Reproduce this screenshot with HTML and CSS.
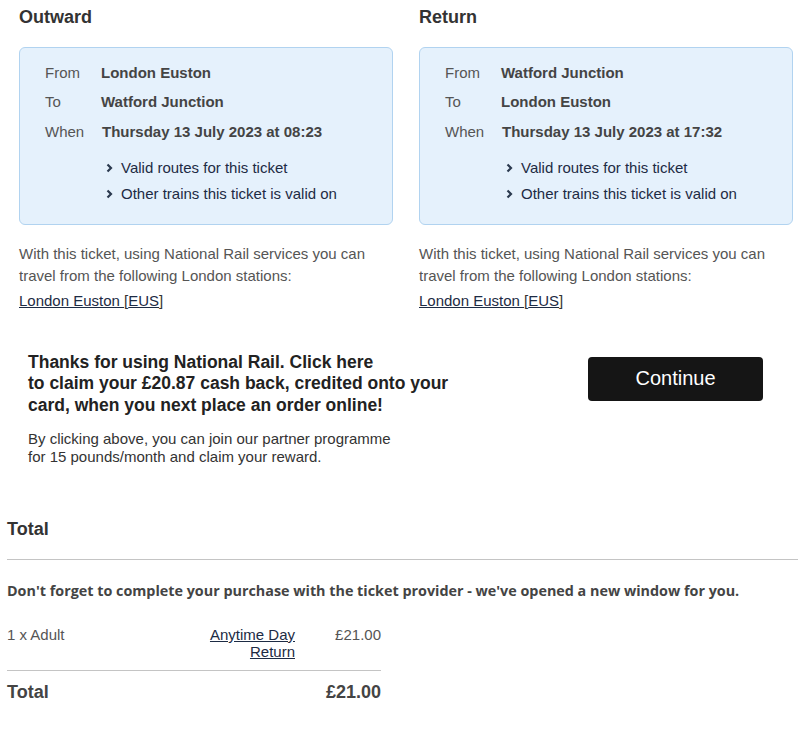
FILE: index.html
```html
<!DOCTYPE html>
<html>
<head>
<meta charset="utf-8">
<link rel="stylesheet" href="styles.css">
</head>
<body>
<div class="page">
  <div class="journeys">
    <section class="journey">
      <h2 class="jhead">Outward</h2>
      <div class="box">
        <div class="row"><span class="lbl">From</span><span class="val">London Euston</span></div>
        <div class="row"><span class="lbl">To</span><span class="val">Watford Junction</span></div>
        <div class="row"><span class="lbl">When</span><span class="val when">Thursday 13 July 2023 at 08:23</span></div>
        <ul class="links">
          <li><span class="chev"><svg width="7" height="10" viewBox="0 0 7 10"><path d="M1.5 1.5 L5 5 L1.5 8.5" fill="none" stroke="#2b3a4f" stroke-width="2.2"/></svg></span>Valid routes for this ticket</li>
          <li><span class="chev"><svg width="7" height="10" viewBox="0 0 7 10"><path d="M1.5 1.5 L5 5 L1.5 8.5" fill="none" stroke="#2b3a4f" stroke-width="2.2"/></svg></span>Other trains this ticket is valid on</li>
        </ul>
      </div>
      <p class="desc">With this ticket, using National Rail services you can travel from the following London stations:</p>
      <p class="stations"><a class="stn" href="#">London Euston </a>[<a class="stn" href="#">EUS</a>]</p>
    </section>
    <section class="journey">
      <h2 class="jhead">Return</h2>
      <div class="box">
        <div class="row"><span class="lbl">From</span><span class="val">Watford Junction</span></div>
        <div class="row"><span class="lbl">To</span><span class="val">London Euston</span></div>
        <div class="row"><span class="lbl">When</span><span class="val when">Thursday 13 July 2023 at 17:32</span></div>
        <ul class="links">
          <li><span class="chev"><svg width="7" height="10" viewBox="0 0 7 10"><path d="M1.5 1.5 L5 5 L1.5 8.5" fill="none" stroke="#2b3a4f" stroke-width="2.2"/></svg></span>Valid routes for this ticket</li>
          <li><span class="chev"><svg width="7" height="10" viewBox="0 0 7 10"><path d="M1.5 1.5 L5 5 L1.5 8.5" fill="none" stroke="#2b3a4f" stroke-width="2.2"/></svg></span>Other trains this ticket is valid on</li>
        </ul>
      </div>
      <p class="desc">With this ticket, using National Rail services you can travel from the following London stations:</p>
      <p class="stations"><a class="stn" href="#">London Euston </a>[<a class="stn" href="#">EUS</a>]</p>
    </section>
  </div>

  <div class="promo">
    <div class="promo-text">
      <p class="promo-title">Thanks for using National Rail. Click here<br>to claim your £20.87 cash back, credited onto your card, when you next place an order online!</p>
      <p class="promo-small">By clicking above, you can join our partner programme<br>for 15 pounds/month and claim your reward.</p>
    </div>
    <button class="continue">Continue</button>
  </div>

  <h2 class="total-head">Total</h2>
  <hr class="rule">
  <p class="reminder">Don't forget to complete your purchase with the ticket provider - we've opened a new window for you.</p>
  <div class="summary">
    <div class="line">
      <span class="qty">1 x Adult</span>
      <a class="tkt" href="#">Anytime Day<br>Return</a>
      <span class="price">£21.00</span>
    </div>
    <div class="tot">
      <span>Total</span>
      <span>£21.00</span>
    </div>
  </div>
</div>
</body>
</html>
```

FILE: styles.css
```css
* { box-sizing: border-box; }
html, body { margin: 0; padding: 0; background: #fff; }
body {
  font-family: "Liberation Sans", Arial, sans-serif;
  color: #333;
  font-size: 15px;
}
.page { padding: 0 0 0 7px; }
.journeys {
  display: grid;
  grid-template-columns: 374px 374px;
  column-gap: 26px;
  padding-left: 12px;
}
.jhead {
  font-size: 18px;
  font-weight: bold;
  margin: 7px 0 0;
  line-height: 20px;
  color: #333;
}
.box {
  margin-top: 20px;
  background: #e5f1fc;
  border: 1px solid #b1d3f0;
  border-radius: 6px;
  padding: 15px 0 20px 25px;
}
.row {
  display: flex;
  height: 29.5px;
  align-items: flex-start;
  line-height: 20px;
}
.row:first-child { height: 29px; }
.row:nth-child(2) { height: 30px; }
.lbl { width: 56px; color: #555; }
.val { font-weight: bold; color: #444; }
.when { margin-left: 1px; }
.links {
  list-style: none;
  margin: 6px 0 0 61px;
  padding: 0;
}
.links li {
  line-height: 20px;
  height: 26px;
  color: #1d2b44;
  display: flex;
  align-items: flex-start;
}
.links li:last-child { height: 20px; }
.chev { width: 15px; padding-top: 5px; display: inline-block; }
.chev svg { display: block; }
.desc {
  margin: 18px 0 0;
  line-height: 22px;
  color: #555;
}
.stations {
  margin: 3px 0 0;
  line-height: 22px;
  color: #333;
}
.stn { color: #1d2b44; text-decoration: underline; }
.promo {
  display: flex;
  align-items: flex-start;
  margin-top: 40px;
  padding-left: 21px;
}
.promo-text { width: 560px; }
.promo-title {
  margin: 0;
  font-size: 17.5px;
  font-weight: bold;
  line-height: 21.5px;
  color: #222;
  width: 425px;
}
.promo-small {
  margin: 14px 0 0;
  font-size: 15px;
  line-height: 18px;
  color: #333;
}
.continue {
  margin-top: 5px;
  width: 175px;
  height: 44px;
  background: #151515;
  color: #fff;
  border: none;
  border-radius: 4px;
  font-family: "Liberation Sans", Arial, sans-serif;
  font-size: 20px;
}
.total-head {
  font-size: 18px;
  font-weight: bold;
  margin: 53px 0 0;
  line-height: 20px;
}
.rule {
  border: none;
  border-top: 1px solid #c4c4c4;
  margin: 20px 0 0;
}
.reminder {
  font-family: "Open Sans", sans-serif;
  font-weight: bold;
  font-size: 14.35px;
  color: #444;
  margin: 21px 0 0;
  line-height: 20px;
}
.summary { width: 374px; margin-top: 25px; }
.line {
  display: flex;
  align-items: flex-start;
  border-bottom: 1px solid #c4c4c4;
  padding-bottom: 10px;
  line-height: 17px;
  font-size: 15px;
}
.qty { width: 200px; color: #555; }
.tkt { width: 88px; text-align: right; color: #1d2b44; }
.price { flex: 1; text-align: right; color: #555; }
.tot {
  display: flex;
  justify-content: space-between;
  font-size: 18px;
  font-weight: bold;
  margin-top: 11px;
  line-height: 20px;
  color: #444;
}
```
